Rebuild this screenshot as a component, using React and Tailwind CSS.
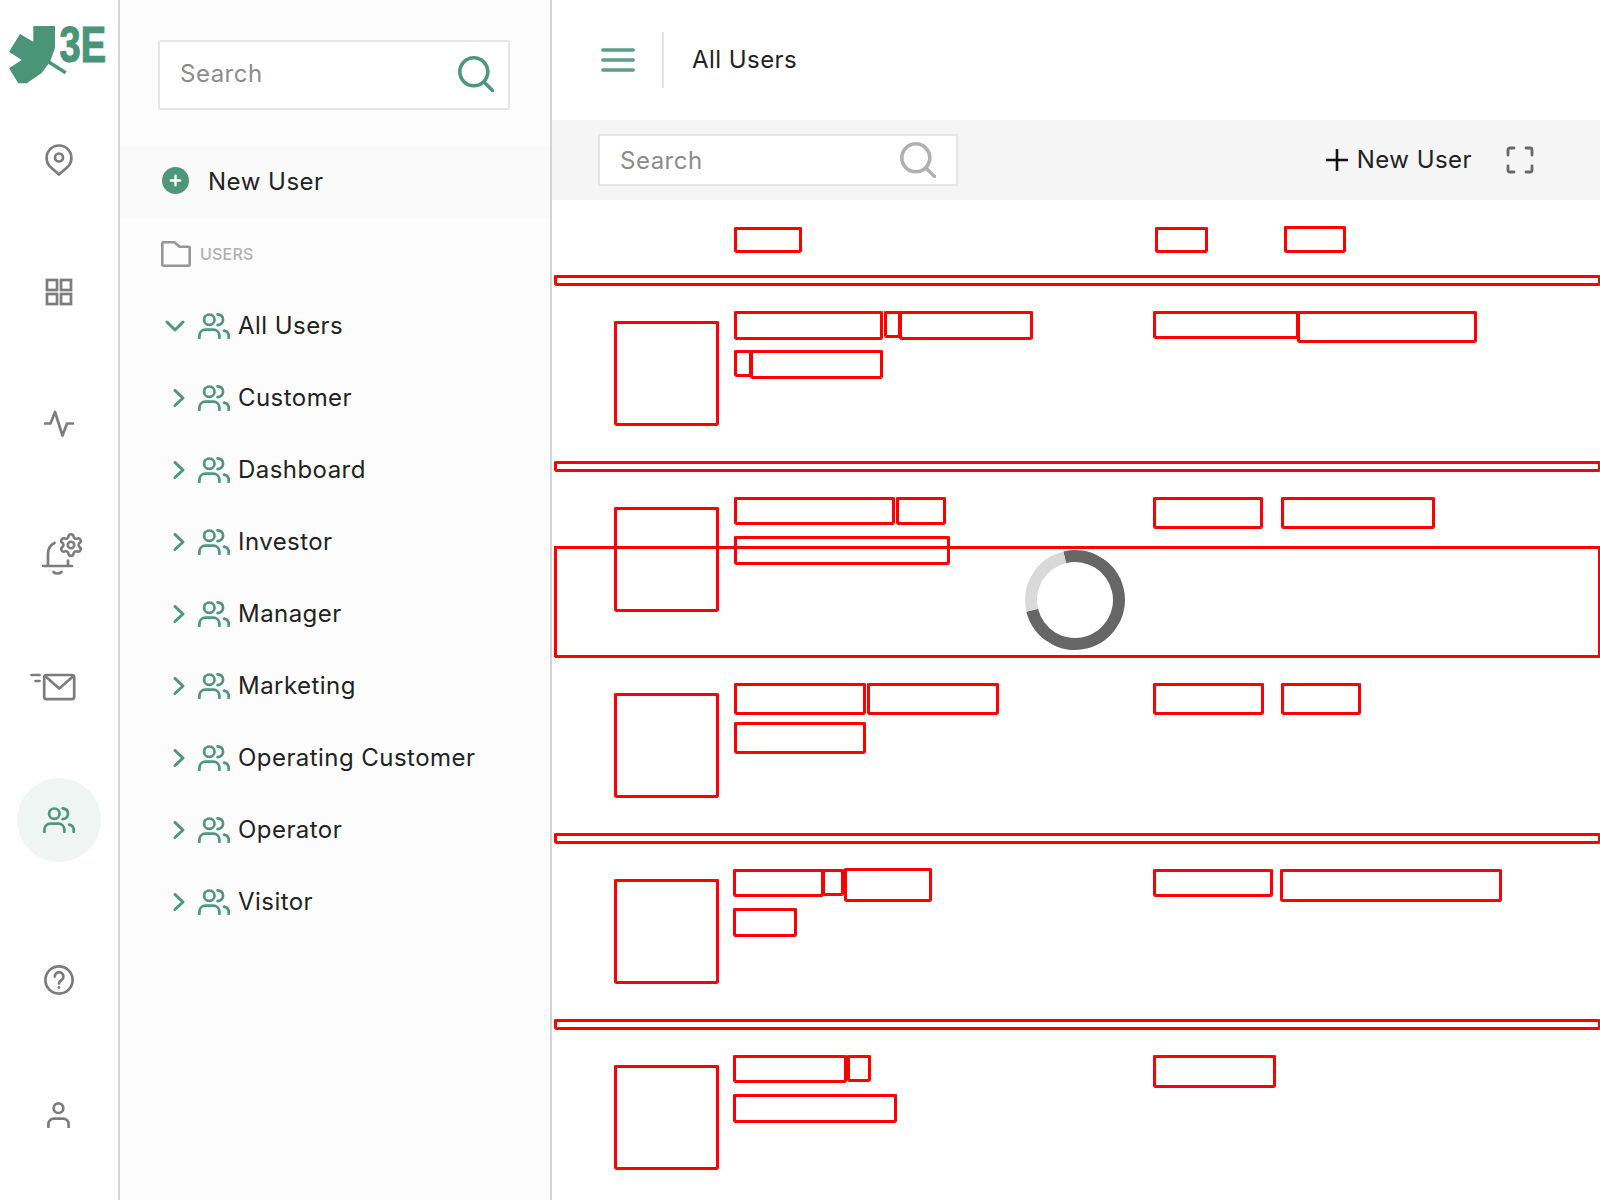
import React from 'react';
import { Settings } from 'lucide-react';

const GREEN = '#4f967d';
const GRAY = '#7c7c7c';

function UsersIcon({ color = GREEN }) {
  return (
    <svg width="32" height="26" viewBox="0 0 32 26" fill="none" stroke={color} strokeWidth="2.7" strokeLinecap="round">
      <circle cx="11.3" cy="6.7" r="5.2" />
      <path d="M19.6 1.3C23 1.6 25 3.8 25 6.7S23 11.8 19.6 12.2" />
      <path d="M1.4 25V23C1.4 19 4 16.7 7.5 16.7H15.2C18.8 16.7 21.4 19 21.4 23V25" />
      <path d="M26.2 17.6C28.9 18.2 30.7 20.4 30.7 23V25" />
    </svg>
  );
}

function SearchIcon({ color, size = 36, className }) {
  return (
    <svg width={size} height={size} viewBox="0 0 36 36" fill="none" stroke={color} strokeWidth="3.6" strokeLinecap="round" className={className}>
      <circle cx="15.8" cy="15.8" r="14" />
      <path d="M26 26L34.5 34.5" />
    </svg>
  );
}

function Logo() {
  return (
    <svg width="118" height="100" viewBox="0 0 118 100" className="block">
      <path fill="#4a9478" d="M33.3 26H55V48L50 61.7L41.7 73L26.7 83.3H18.3L9 68.3L21.7 60L9 51.7L20 34L33.3 41.7Z" />
      <path stroke="#4a9478" strokeWidth="3.5" d="M48 61.5L65.7 72.7" />
      <text
        transform="translate(59.5 62) scale(0.76 1)"
        fontFamily="Liberation Sans, sans-serif"
        fontWeight="700"
        fontSize="50"
        fill="#4a9478"
        stroke="#4a9478"
        strokeWidth="1.2"
      >
        3E
      </text>
    </svg>
  );
}

function Rail() {
  return (
    <aside className="w-[120px] shrink-0 border-r-2 border-[#d5d5d5] bg-white flex flex-col">
      <Logo />
      <div className="mt-[44px] ml-[45px] flex">
        <svg width="28" height="32" viewBox="0 0 28 32" fill="none" stroke={GRAY} strokeWidth="2.7" strokeLinejoin="round">
          <path d="M14 30.5L6 23.5C3 20.8 1.6 17.4 1.6 13.9A12.4 12.4 0 0 1 26.4 13.9C26.4 17.4 25 20.8 22 23.5Z" />
          <circle cx="14" cy="13.5" r="4" />
        </svg>
      </div>
      <div className="mt-[102px] ml-[45px] flex">
        <svg width="28" height="28" viewBox="0 0 28 28" fill="none" stroke={GRAY} strokeWidth="2.7">
          <rect x="2" y="2" width="10" height="10" />
          <rect x="16" y="2" width="10" height="10" />
          <rect x="2" y="16" width="10" height="10" />
          <rect x="16" y="16" width="10" height="10" />
        </svg>
      </div>
      <div className="mt-[104px] ml-[44px] flex">
        <svg width="30" height="28" viewBox="0 0 30 28" fill="none" stroke={GRAY} strokeWidth="2.7" strokeLinecap="round" strokeLinejoin="round">
          <path d="M1 13.5H6.5L11 2L18.5 25.5L23 13.5H29" />
        </svg>
      </div>
      <div className="mt-[94px] ml-[42px] flex">
        <svg width="42" height="44" viewBox="0 0 42 44" fill="none" stroke={GRAY} strokeWidth="2.7" strokeLinecap="round">
          <path d="M6 33V22C6 17 8 13 12.5 11" />
          <path d="M1 34H30" />
          <path d="M26 28.5V33" />
          <path d="M11.5 40C13.5 42 17.5 42 19.5 40" />
          <Settings x="16" y="0" width="26" height="26" color={GRAY} strokeWidth="2.4" />
        </svg>
      </div>
      <div className="mt-[97px] ml-[30px] flex">
        <svg width="46" height="28" viewBox="0 0 46 28" fill="none" stroke={GRAY} strokeWidth="2.7" strokeLinecap="round" strokeLinejoin="round">
          <rect x="14.2" y="2" width="30" height="24.2" rx="2.5" />
          <path d="M15 3L29.2 15.5L43.5 3" />
          <path d="M1.5 2H9.5" />
          <path d="M5.5 8H9.5" />
        </svg>
      </div>
      <div className="mt-[77px] ml-[17px] w-[84px] h-[84px] rounded-full bg-[#eef5f2] flex items-center justify-center">
        <UsersIcon />
      </div>
      <div className="mt-[103px] ml-[44px] flex">
        <svg width="30" height="30" viewBox="0 0 30 30" fill="none" stroke={GRAY} strokeWidth="2.7" strokeLinecap="round">
          <circle cx="15" cy="15" r="13.6" />
          <path d="M10.8 11.6A4.3 4.3 0 1 1 17.6 15C16 16 15 16.8 15 18.6" />
          <path d="M15 22.4V22.5" />
        </svg>
      </div>
      <div className="mt-[107px] ml-[47px] flex">
        <svg width="23" height="26" viewBox="0 0 23 26" fill="none" stroke={GRAY} strokeWidth="2.7" strokeLinecap="round">
          <circle cx="11.5" cy="6.2" r="4.8" />
          <path d="M1.4 25V22.5C1.4 19 3.8 16.6 7 16.6H16C19.2 16.6 21.6 19 21.6 22.5V25" />
        </svg>
      </div>
    </aside>
  );
}

const groups = ['All Users', 'Customer', 'Dashboard', 'Investor', 'Manager', 'Marketing', 'Operating Customer', 'Operator', 'Visitor'];

function Tree() {
  return (
    <aside className="w-[432px] shrink-0 border-r-2 border-[#d5d5d5] bg-[#fcfcfc] flex flex-col">
      <div className="mt-[40px] ml-[38px] w-[352px] h-[70px] border-2 border-[#e5e5e5] rounded-[2px] bg-white flex items-center justify-between pl-[20px] pr-[14px]">
        <span className="-mt-[3px] text-[24px] tracking-[0.5px] text-[#8c8c8c]">Search</span>
        <SearchIcon color={GREEN} className="-mt-[3px]" />
      </div>
      <div className="mt-[36px] h-[72px] bg-[#fafafa] flex items-center pl-[42px]">
        <svg width="27" height="27" viewBox="0 0 27 27" className="-mt-[4px]">
          <circle cx="13.5" cy="13.5" r="13.5" fill={GREEN} />
          <path d="M13.5 8.8V18.2M8.8 13.5H18.2" stroke="#fff" strokeWidth="2.4" strokeLinecap="round" />
        </svg>
        <span className="ml-[19px] text-[24px] tracking-[0.5px] text-[#222]">New User</span>
      </div>
      <div className="mt-[23px] ml-[41px] flex items-center">
        <svg width="30" height="26" viewBox="0 0 30 26" fill="none" stroke="#969696" strokeWidth="2.6" strokeLinejoin="round">
          <path d="M1.3 2.3A1 1 0 0 1 2.3 1.3H13.5L18.5 5.8H27.7A1 1 0 0 1 28.7 6.8V23.7A1 1 0 0 1 27.7 24.7H2.3A1 1 0 0 1 1.3 23.7Z" />
        </svg>
        <span className="ml-[9px] text-[16px] tracking-[0.2px] font-medium text-[#b0b0b0]">USERS</span>
      </div>
      <ul className="mt-[23px]">
        {groups.map((name, i) => (
          <li key={name} className="h-[72px] flex items-center">
            <span className="w-[65px] flex justify-end shrink-0">
              {i === 0 ? (
                <svg width="20" height="12" viewBox="0 0 20 12" fill="none" stroke={GREEN} strokeWidth="3" strokeLinecap="round" strokeLinejoin="round">
                  <path d="M2 2L10 10L18 2" />
                </svg>
              ) : (
                <svg width="12" height="18" viewBox="0 0 12 18" fill="none" stroke={GREEN} strokeWidth="3" strokeLinecap="round" strokeLinejoin="round">
                  <path d="M2 1.5L10 9L2 16.5" />
                </svg>
              )}
            </span>
            <span className="ml-[13px] flex shrink-0">
              <UsersIcon />
            </span>
            <span className="ml-[8px] text-[24px] tracking-[0.45px] text-[#222]">{name}</span>
          </li>
        ))}
      </ul>
    </aside>
  );
}

// red frame: 3px thick, grows 1px left, right and down past its layout box
const frame = 'border-x-2 border-t-[3px] border-b-2 border-[#ff0000] shadow-[-1px_0_0_#ff0000,1px_0_0_#ff0000,0_1px_0_#ff0000]';

function Box({ className }) {
  return <div className={`${frame} rounded-[1px] shrink-0 ${className}`} />;
}

const rows = [
  {
    line1: ['w-[147px] h-[28px]', 'ml-[3px] w-[15px] h-[26px]', 'w-[132px] h-[28px]'],
    line2: ['w-[16px] h-[26px]', 'w-[131px] h-[28px]'],
    col2: ['w-[144px] h-[27px]', 'w-[178px] h-[31px]'],
  },
  {
    line1: ['w-[159px] h-[27px]', 'ml-[3px] w-[48px] h-[27px]'],
    line2: ['w-[214px] h-[28px]'],
    col2: ['w-[108px] h-[31px]', 'ml-[20px] w-[152px] h-[31px]'],
  },
  {
    line1: ['w-[130px] h-[31px]', 'ml-[3px] w-[130px] h-[31px]'],
    line2: ['w-[130px] h-[31px]'],
    col2: ['w-[109px] h-[31px]', 'ml-[19px] w-[78px] h-[31px]'],
    noDivider: true,
  },
  {
    line1: ['-ml-px w-[89px] h-[27px]', 'w-[20px] h-[26px]', 'ml-[2px] -mt-px w-[86px] h-[33px]'],
    line2: ['-ml-px w-[62px] h-[28px]'],
    col2: ['w-[118px] h-[27px]', 'ml-[9px] w-[220px] h-[32px]'],
  },
  {
    line1: ['-ml-px w-[112px] h-[27px]', 'ml-[2px] w-[22px] h-[26px]'],
    line2: ['-ml-px w-[162px] h-[28px]'],
    col2: ['w-[121px] h-[32px]'],
  },
];

function Row({ row }) {
  return (
    <div>
      {row.noDivider ? <div className="h-[11px]" /> : <Box className="ml-[3px] mb-px h-[10px]" />}
      <div className="h-[175px] flex items-start pl-[63px] pt-[25px]">
        <Box className="mt-[10px] w-[103px] h-[104px]" />
        <div className="ml-[17px] w-[419px] shrink-0">
          <div className="h-[39px] flex items-start">
            {row.line1.map((c, i) => <Box key={i} className={c} />)}
          </div>
          <div className="flex items-start">
            {row.line2.map((c, i) => <Box key={i} className={c} />)}
          </div>
        </div>
        <div className="flex items-start">
          {row.col2.map((c, i) => <Box key={i} className={c} />)}
        </div>
      </div>
    </div>
  );
}

function Main() {
  return (
    <main className="flex-1 min-w-0 flex flex-col bg-white">
      <header className="h-[120px] shrink-0 flex items-center pl-[49px]">
        <svg width="34" height="24" viewBox="0 0 34 24" fill="none" stroke="#5c9e88" strokeWidth="3.5" strokeLinecap="round">
          <path d="M1.8 2H32.2M1.8 12H32.2M1.8 22H32.2" />
        </svg>
        <div className="ml-[27px] w-[2px] h-[56px] bg-[#e5e5e5]" />
        <h1 className="ml-[28px] text-[24px] tracking-[0.45px] text-[#222]">All Users</h1>
      </header>
      <div className="h-[80px] shrink-0 bg-[#f5f5f5] flex items-center pl-[46px] pr-[66px]">
        <div className="w-[360px] h-[52px] border-2 border-[#e5e5e5] bg-white flex items-center justify-between pl-[20px] pr-[20px]">
          <span className="mt-[2px] text-[24px] tracking-[0.5px] text-[#8c8c8c]">Search</span>
          <SearchIcon color="#b0b0b0" />
        </div>
        <button className="ml-auto flex items-center text-[24px] tracking-[0.45px] text-[#222]">
          <svg width="24" height="24" viewBox="0 0 24 24" fill="none" stroke="#111" strokeWidth="2.6">
            <path d="M12 1V23M1 12H23" />
          </svg>
          <span className="ml-[8px]">New User</span>
        </button>
        <svg width="28" height="28" viewBox="0 0 28 28" fill="none" stroke="#666" strokeWidth="2.8" strokeLinecap="round" strokeLinejoin="round" className="ml-[34px]">
          <path d="M2 9V4A2 2 0 0 1 4 2H8M20 2H24A2 2 0 0 1 26 4V9M26 20V24A2 2 0 0 1 24 26H20M8 26H4A2 2 0 0 1 2 24V20" />
        </svg>
      </div>
      <section className="relative flex-1 min-h-0">
        <div className="h-[75px] flex items-start pt-[26px] pl-[183px]">
          <Box className="mt-px w-[66px] h-[25px]" />
          <Box className="mt-px ml-[355px] w-[51px] h-[25px]" />
          <Box className="ml-[78px] w-[60px] h-[26px]" />
        </div>
        {rows.map((row, i) => <Row key={i} row={row} />)}
        <div className={`${frame} absolute left-[3px] right-0 top-[346px] h-[111px] flex items-center justify-center pr-[5px] pb-[5px]`}>
          <div className="w-[100px] h-[100px] rounded-full border-[12px] border-[#666666] border-l-[#d9d9d9] rotate-[31.5deg]" />
        </div>
      </section>
    </main>
  );
}

export default function App() {
  return (
    <div className="flex w-[1600px] h-[1200px] overflow-hidden bg-white font-['Inter',sans-serif]">
      <Rail />
      <Tree />
      <Main />
    </div>
  );
}
